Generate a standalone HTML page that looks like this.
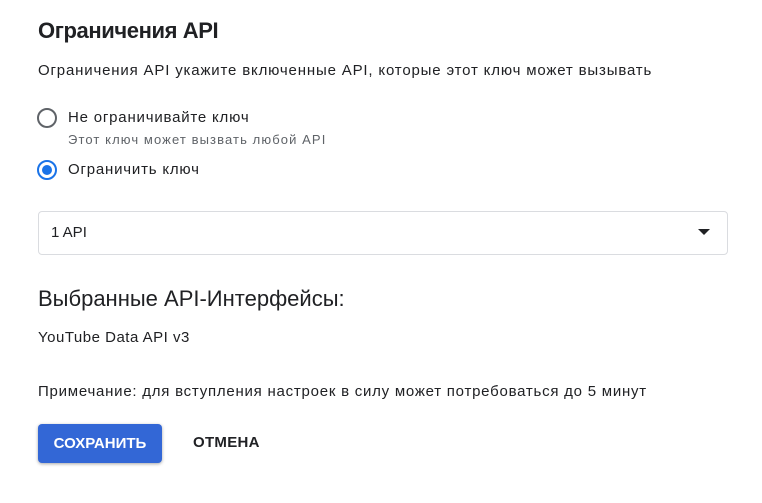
<!DOCTYPE html>
<html><head><meta charset="utf-8"><style>
*{margin:0;padding:0;box-sizing:border-box}
body{width:762px;height:503px;background:#fff;font-family:"Liberation Sans",Arial,sans-serif;color:#202124;position:relative;overflow:hidden}
.a{position:absolute;white-space:nowrap}
.radio{position:absolute;width:20px;height:20px;border-radius:50%;border:2px solid #5f6368}
.radio.on{border-color:#1a73e8}
.radio.on::after{content:"";position:absolute;left:3px;top:3px;width:10px;height:10px;border-radius:50%;background:#1a73e8}
</style></head><body>
<div class="a" style="left:38px;top:18px;font-size:22px;font-weight:bold;letter-spacing:-0.4px;color:#202124">Ограничения API</div>
<div class="a" style="left:38px;top:62px;font-size:15px;letter-spacing:0.83px">Ограничения API укажите включенные API, которые этот ключ может вызывать</div>
<div class="radio" style="left:37px;top:108px"></div>
<div class="a" style="left:68px;top:109px;font-size:15px;letter-spacing:0.8px">Не ограничивайте ключ</div>
<div class="a" style="left:68px;top:132px;font-size:13px;letter-spacing:1.1px;color:#5f6368">Этот ключ может вызвать любой API</div>
<div class="radio on" style="left:37px;top:160px"></div>
<div class="a" style="left:68px;top:161px;font-size:15px;letter-spacing:0.8px">Ограничить ключ</div>
<div class="a" style="left:38px;top:211px;width:690px;height:44px;border:1px solid #dadce0;border-radius:4px"></div>
<div class="a" style="left:51px;top:224px;font-size:15px">1 API</div>
<div class="a" style="left:698px;top:229px;width:0;height:0;border-left:6px solid transparent;border-right:6px solid transparent;border-top:6px solid #202124"></div>
<div class="a" style="left:38px;top:286px;font-size:22px">Выбранные API-Интерфейсы:</div>
<div class="a" style="left:38px;top:329px;font-size:15px;letter-spacing:0.5px">YouTube Data API v3</div>
<div class="a" style="left:38px;top:383px;font-size:15px;letter-spacing:0.76px">Примечание: для вступления настроек в силу может потребоваться до 5 минут</div>
<div class="a" style="left:38px;top:424px;width:124px;height:39px;background:#3367d6;border-radius:4px;box-shadow:0 1px 3px rgba(0,0,0,.35);color:#fff;font-size:15px;font-weight:bold;text-align:center;line-height:39px">СОХРАНИТЬ</div>
<div class="a" style="left:193px;top:434px;font-size:15px;font-weight:bold;letter-spacing:0.3px">ОТМЕНА</div>
</body></html>
